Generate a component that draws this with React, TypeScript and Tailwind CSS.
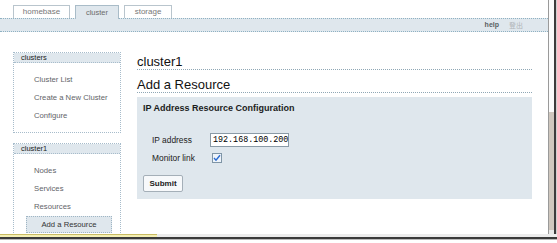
const sideLinks1 = ["Cluster List", "Create a New Cluster", "Configure"];
const sideLinks2 = ["Nodes", "Services", "Resources"];

function Tab({ label, active }: { label: string; active?: boolean }) {
  return (
    <div
      className={
        active
          ? "relative z-10 -mb-px flex h-[14px] w-[44px] items-center justify-center border border-b-0 border-[#a9bcc8] bg-[#dfe7ed] text-[7.5px] text-[#6b6b6b]"
          : "flex h-[13px] items-center justify-center border border-b-0 border-[#b9c5cd] bg-white text-[8px] text-[#777]"
      }
    >
      {label}
    </div>
  );
}

function SideBox({ title, links, children }: { title: string; links: string[]; children?: React.ReactNode }) {
  return (
    <div className="w-[108px] border border-dotted border-[#a7bccb] bg-white">
      <div className="h-[10px] border-b border-dotted border-[#a7bccb] bg-[#dfe7ed] pl-[7px] text-[7.5px] leading-[10px] text-[#222]">
        {title}
      </div>
      <ul className="pt-[8px] pb-[7px]">
        {links.map((l) => (
          <li className="h-[18px] pl-[20px] text-[7.7px] leading-[18px] text-[#5f6468]" key={l}>
            {l}
          </li>
        ))}
        {children}
      </ul>
    </div>
  );
}

export default function App() {
  return (
    <div className="h-[243px] w-[557px] overflow-hidden bg-white font-['Liberation_Sans',Arial,sans-serif]">
      <div className="flex h-[234px]">
        <div className="w-[548px] overflow-hidden">
          <div className="flex h-[18px] items-end pl-[13px]">
            <div className="w-[57px]">
              <Tab label="homebase" />
            </div>
            <div className="ml-[5px]">
              <Tab label="cluster" active />
            </div>
            <div className="ml-[5px] w-[48px]">
              <Tab label="storage" />
            </div>
          </div>
          <div className="flex h-[14px] items-center justify-end gap-[10px] border-y border-dotted border-[#8fb1c2] bg-[#dfe7ed] pr-[25px]">
            <span className="text-[7px] font-bold text-[#5a5f63]">help</span>
            <span className="font-['Noto_Sans_CJK_SC',sans-serif] text-[7px] text-[#b0b4b8]">登出</span>
          </div>

          <div className="flex gap-[16px] pl-[13px] pt-[20px]">
            <div className="flex flex-col gap-[10px]">
              <SideBox title="clusters" links={sideLinks1} />
              <div className="h-[120px]">
                <SideBox title="cluster1" links={sideLinks2}>
                  <li className="ml-[12px] flex h-[17px] w-[86px] items-center justify-center border border-dotted border-[#9fb5c4] bg-[#dfe7ed] text-[7.7px] text-[#333]">
                    Add a Resource
                  </li>
                </SideBox>
              </div>
            </div>

            <div className="w-[395px] pt-[2px]">
              <h1 className="border-b border-dotted border-[#8fa7b5] text-[13px] leading-[15px] text-[#111]">cluster1</h1>
              <h2 className="mt-[7px] border-b border-dotted border-[#8fa7b5] text-[13px] leading-[15px] text-[#111]">
                Add a Resource
              </h2>
              <div className="mt-[4px] h-[102px] bg-[#dfe7ed] pl-[6px] pt-[6px]">
                <div className="text-[9px] font-bold leading-[11px] text-[#1c1c1c]">IP Address Resource Configuration</div>
                <div className="mt-[19px] flex h-[14px] items-center pl-[9px]">
                  <span className="w-[58px] text-[8.4px] text-[#222]">IP address</span>
                  <div className="flex h-[14px] w-[79px] items-center border border-[#8a9aa6] bg-white pl-[2px] font-['Liberation_Mono',monospace] text-[8.4px] text-black">
                    192.168.100.200
                  </div>
                </div>
                <div className="mt-[5px] flex h-[12px] items-center pl-[9px]">
                  <span className="w-[60px] text-[8.4px] text-[#222]">Monitor link</span>
                  <div className="flex h-[10px] w-[10px] items-center justify-center border border-[#7f95a6] bg-[#eef4fa]">
                    <svg width="8" height="8" viewBox="0 0 8 8">
                      <path d="M1 4 L3 6.2 L7 1.2" fill="none" stroke="#2a6bd1" strokeWidth="1.4" />
                    </svg>
                  </div>
                </div>
                <button className="mt-[11px] flex h-[17px] w-[40px] items-center justify-center rounded-[2px] border border-[#a4afb8] bg-[#f7f9fb] text-[8px] font-bold text-[#222]">
                  Submit
                </button>
              </div>
            </div>
          </div>
        </div>

        <div className="flex w-[9px] border-l border-[#9a9a9a]">
          <div className="flex w-[5px] flex-col">
            <div className="h-[112px] bg-[#fbfbfb]" />
            <div className="flex-1 bg-[#cfc7be]" />
            <div className="h-[4px] bg-[#e8e8e8] text-[4px]" />
          </div>
          <div className="w-[2px] bg-[#3c3c3c]" />
          <div className="w-[1px] bg-[#d0d0d0]" />
        </div>
      </div>
      <div className="flex h-[3px]">
        <div className="w-[157px] border-t border-[#c9bb62] bg-[#f4efb4]" />
        <div className="flex-1 bg-[#ececec]" />
      </div>
      <div className="h-[2px] bg-[#3a3a3a]" />
      <div className="h-[1px] bg-[#b8b8b8]" />
      <div className="h-[3px] bg-white" />
    </div>
  );
}
